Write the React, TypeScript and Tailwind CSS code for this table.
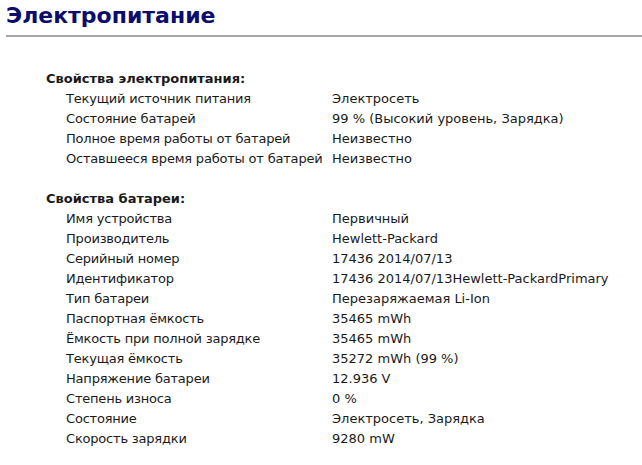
import React from "react";

const power: [string, string][] = [
  ["Текущий источник питания", "Электросеть"],
  ["Состояние батарей", "99 % (Высокий уровень, Зарядка)"],
  ["Полное время работы от батарей", "Неизвестно"],
  ["Оставшееся время работы от батарей", "Неизвестно"],
];

const battery: [string, string][] = [
  ["Имя устройства", "Первичный"],
  ["Производитель", "Hewlett-Packard"],
  ["Серийный номер", "17436 2014/07/13"],
  ["Идентификатор", "17436 2014/07/13Hewlett-PackardPrimary"],
  ["Тип батареи", "Перезаряжаемая Li-Ion"],
  ["Паспортная ёмкость", "35465 mWh"],
  ["Ёмкость при полной зарядке", "35465 mWh"],
  ["Текущая ёмкость", "35272 mWh (99 %)"],
  ["Напряжение батареи", "12.936 V"],
  ["Степень износа", "0 %"],
  ["Состояние", "Электросеть, Зарядка"],
  ["Скорость зарядки", "9280 mW"],
];

function Section({ title, rows }: { title: string; rows: [string, string][] }) {
  return (
    <div className="flex flex-col">
      <div className="pl-[46px] h-5 leading-5 font-bold">{title}</div>
      {rows.map(([k, v]) => (
        <div key={k} className="grid grid-cols-[332px_1fr] h-5 leading-5">
          <div className="pl-[66px] whitespace-nowrap tracking-[-0.2px]">{k}</div>
          <div className="whitespace-nowrap">{v}</div>
        </div>
      ))}
    </div>
  );
}

export default function App() {
  return (
    <div
      className="w-[642px] h-[465px] bg-white text-[#1a1a1a] text-[13px] overflow-hidden"
      style={{ fontFamily: '"DejaVu Sans", Verdana, sans-serif' }}
    >
      <div className="pl-[6px] pt-[2px] h-[28px] leading-[28px] text-[22px] font-bold text-[#0c0c6c]">
        Электропитание
      </div>
      <div className="ml-[6px] mt-[7px] border-t-2 border-[#a8a8a8]" />
      <div className="pt-[32px] flex flex-col gap-5">
        <Section title="Свойства электропитания:" rows={power} />
        <Section title="Свойства батареи:" rows={battery} />
      </div>
    </div>
  );
}
